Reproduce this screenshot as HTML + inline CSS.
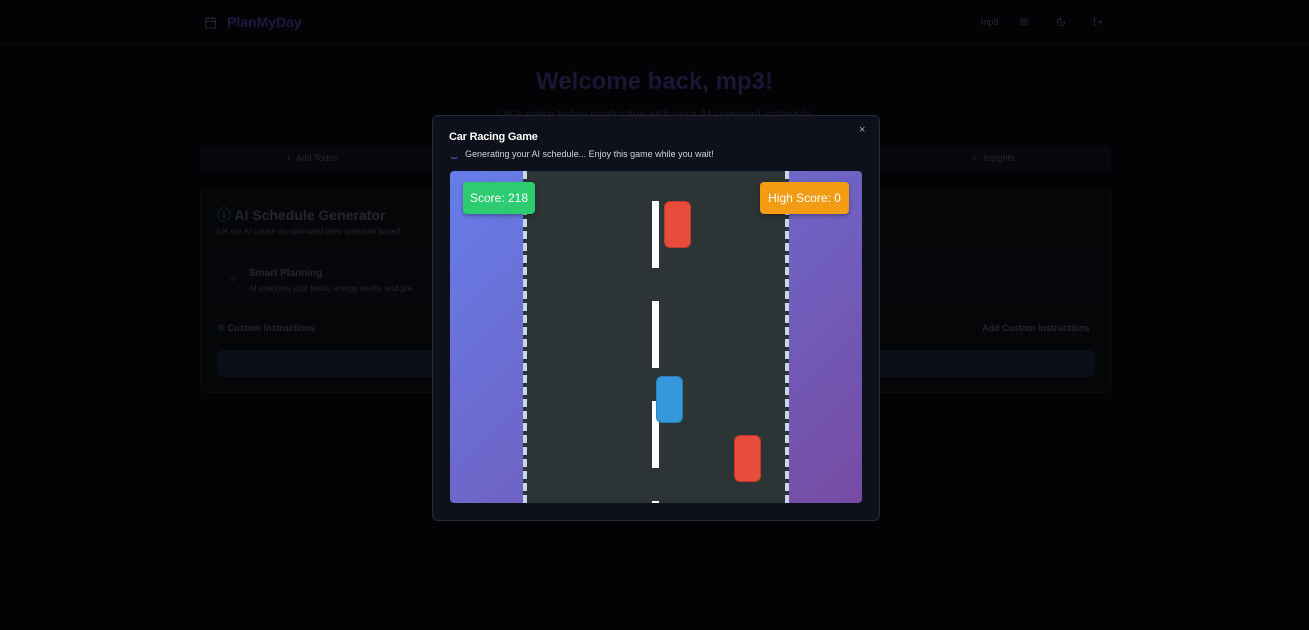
<!DOCTYPE html>
<html><head><meta charset="utf-8"><style>
*{box-sizing:border-box;margin:0;padding:0}
body{width:1309px;height:630px;background:#030305;font-family:"Liberation Sans",sans-serif;position:relative;overflow:hidden}
.a{position:absolute}
.dim{color:#24262c}
.dash{position:absolute;width:4px;background:repeating-linear-gradient(to bottom,#c8d6e5 0 8px,#2d3436 8px 12px)}
.cd{position:absolute;left:652px;width:7px;height:67px;background:#fff}
.car{position:absolute;width:27px;height:47px;border-radius:6px}
</style></head><body>
<div class="a" style="left:0;top:0;width:1309px;height:45px;border-bottom:1px solid #0a0b0f"></div>
<svg class="a" style="left:204px;top:16px" width="13" height="13" viewBox="0 0 24 24" fill="none" stroke="#24262f" stroke-width="2"><rect x="3" y="4" width="18" height="18" rx="2"/><path d="M16 2v4M8 2v4M3 10h18"/></svg>
<div class="a" style="left:227px;top:14px;font-size:14px;font-weight:bold;color:#1d1940">PlanMyDay</div>
<div class="a" style="left:981px;top:17px;font-size:9px;color:#2a2c32">mp3</div>
<svg class="a" style="left:1019px;top:17px" width="10" height="10" viewBox="0 0 24 24" fill="none" stroke="#2a2c32" stroke-width="2"><circle cx="12" cy="12" r="3"/><circle cx="12" cy="12" r="8"/></svg>
<svg class="a" style="left:1056px;top:17px" width="10" height="10" viewBox="0 0 24 24" fill="none" stroke="#2a2c32" stroke-width="2"><path d="M12 3a6 6 0 0 0 9 9 9 9 0 1 1-9-9z"/></svg>
<svg class="a" style="left:1093px;top:17px" width="10" height="10" viewBox="0 0 24 24" fill="none" stroke="#2a2c32" stroke-width="2"><path d="M9 21H5a2 2 0 0 1-2-2V5a2 2 0 0 1 2-2h4M16 17l5-5-5-5M21 12H9"/></svg>
<div class="a" style="left:0;width:1309px;top:68px;text-align:center;font-size:24px;font-weight:bold;color:#1a1634">Welcome back, mp3!</div>
<div class="a" style="left:0;width:1309px;top:107px;text-align:center;font-size:12px;color:#16162a">Let's make today productive with your AI-powered schedule</div>
<div class="a" style="left:200px;top:146px;width:911px;height:26px;background:#07080b;border-radius:4px"></div>
<div class="a dim" style="left:286px;top:153px;font-size:9px">+&nbsp; Add Todos</div>
<div class="a dim" style="left:971px;top:153px;font-size:9px">✧ &nbsp;Insights</div>
<div class="a" style="left:200px;top:188px;width:911px;height:205px;background:#050608;border:1px solid #0b0c10;border-radius:5px"></div>
<div class="a" style="left:217px;top:205px;font-size:14px;font-weight:bold;color:#24262c"><span style="color:#161f36">ⓘ</span> AI Schedule Generator</div>
<div class="a dim" style="left:217px;top:227px;font-size:8px">Let our AI create an optimized daily schedule based</div>
<div class="a" style="left:217px;top:252px;width:877px;height:52px;background:#06070a;border:1px solid #0a0b0f;border-radius:5px"></div>
<div class="a" style="left:228px;top:272px;font-size:12px;color:#161f36">✧</div>
<div class="a dim" style="left:249px;top:268px;font-size:10px;font-weight:bold">Smart Planning</div>
<div class="a dim" style="left:249px;top:284px;font-size:8px">AI analyzes your tasks, energy levels, and pre</div>
<div class="a dim" style="left:217px;top:323px;font-size:9px;font-weight:bold"><span style="color:#181c28">⚙</span> Custom Instructions</div>
<div class="a dim" style="left:982px;top:323px;font-size:9px;font-weight:bold">Add Custom Instructions</div>
<div class="a" style="left:217px;top:350px;width:878px;height:27px;background:#0b0e15;border-radius:4px"></div>

<div class="a" style="left:432px;top:115px;width:448px;height:406px;background:#0e111b;border:1px solid #262b3a;border-radius:6px"></div>
<div class="a" style="left:449px;top:131px;font-size:11px;font-weight:bold;color:#fff;letter-spacing:-0.2px">Car Racing Game</div>
<div class="a" style="left:859px;top:124px;font-size:11px;color:#aaa">×</div>
<div class="a" style="left:449px;top:149px;width:10px;height:10px;border-radius:50%;border:1.5px solid transparent;border-bottom-color:#3b6fd4"></div>
<div class="a" style="left:465px;top:149px;font-size:9px;color:#cfd3dc">Generating your AI schedule... Enjoy this game while you wait!</div>

<div class="a" style="left:450px;top:171px;width:412px;height:332px;border-radius:4px;overflow:hidden;background:linear-gradient(135deg,#667eea,#764ba2)"></div>
<div class="a" style="left:523px;top:171px;width:266px;height:332px;background:#2d3436;overflow:hidden">
<div class="dash" style="left:0;top:0;height:332px"></div>
<div class="dash" style="left:262px;top:0;height:332px"></div>
</div>
<div class="cd" style="top:201px"></div>
<div class="cd" style="top:301px"></div>
<div class="cd" style="top:401px"></div>
<div class="cd" style="top:501px;height:2px"></div>
<div class="car" style="left:664px;top:201px;background:#e74c3c;border:1px solid #c0392b"></div>
<div class="car" style="left:656px;top:376px;background:#3498db;border:1px solid #2980b9"></div>
<div class="car" style="left:734px;top:435px;background:#e74c3c;border:1px solid #c0392b"></div>
<div class="a" style="left:463px;top:182px;width:72px;height:32px;background:#2ecc71;border-radius:4px;color:#fff;font-size:12px;line-height:32px;text-align:center;box-shadow:0 2px 4px rgba(0,0,0,.3)">Score: 218</div>
<div class="a" style="left:760px;top:182px;width:89px;height:32px;background:#f39c12;border-radius:4px;color:#fff;font-size:12px;line-height:32px;text-align:center;box-shadow:0 2px 4px rgba(0,0,0,.3)">High Score: 0</div>
</body></html>
